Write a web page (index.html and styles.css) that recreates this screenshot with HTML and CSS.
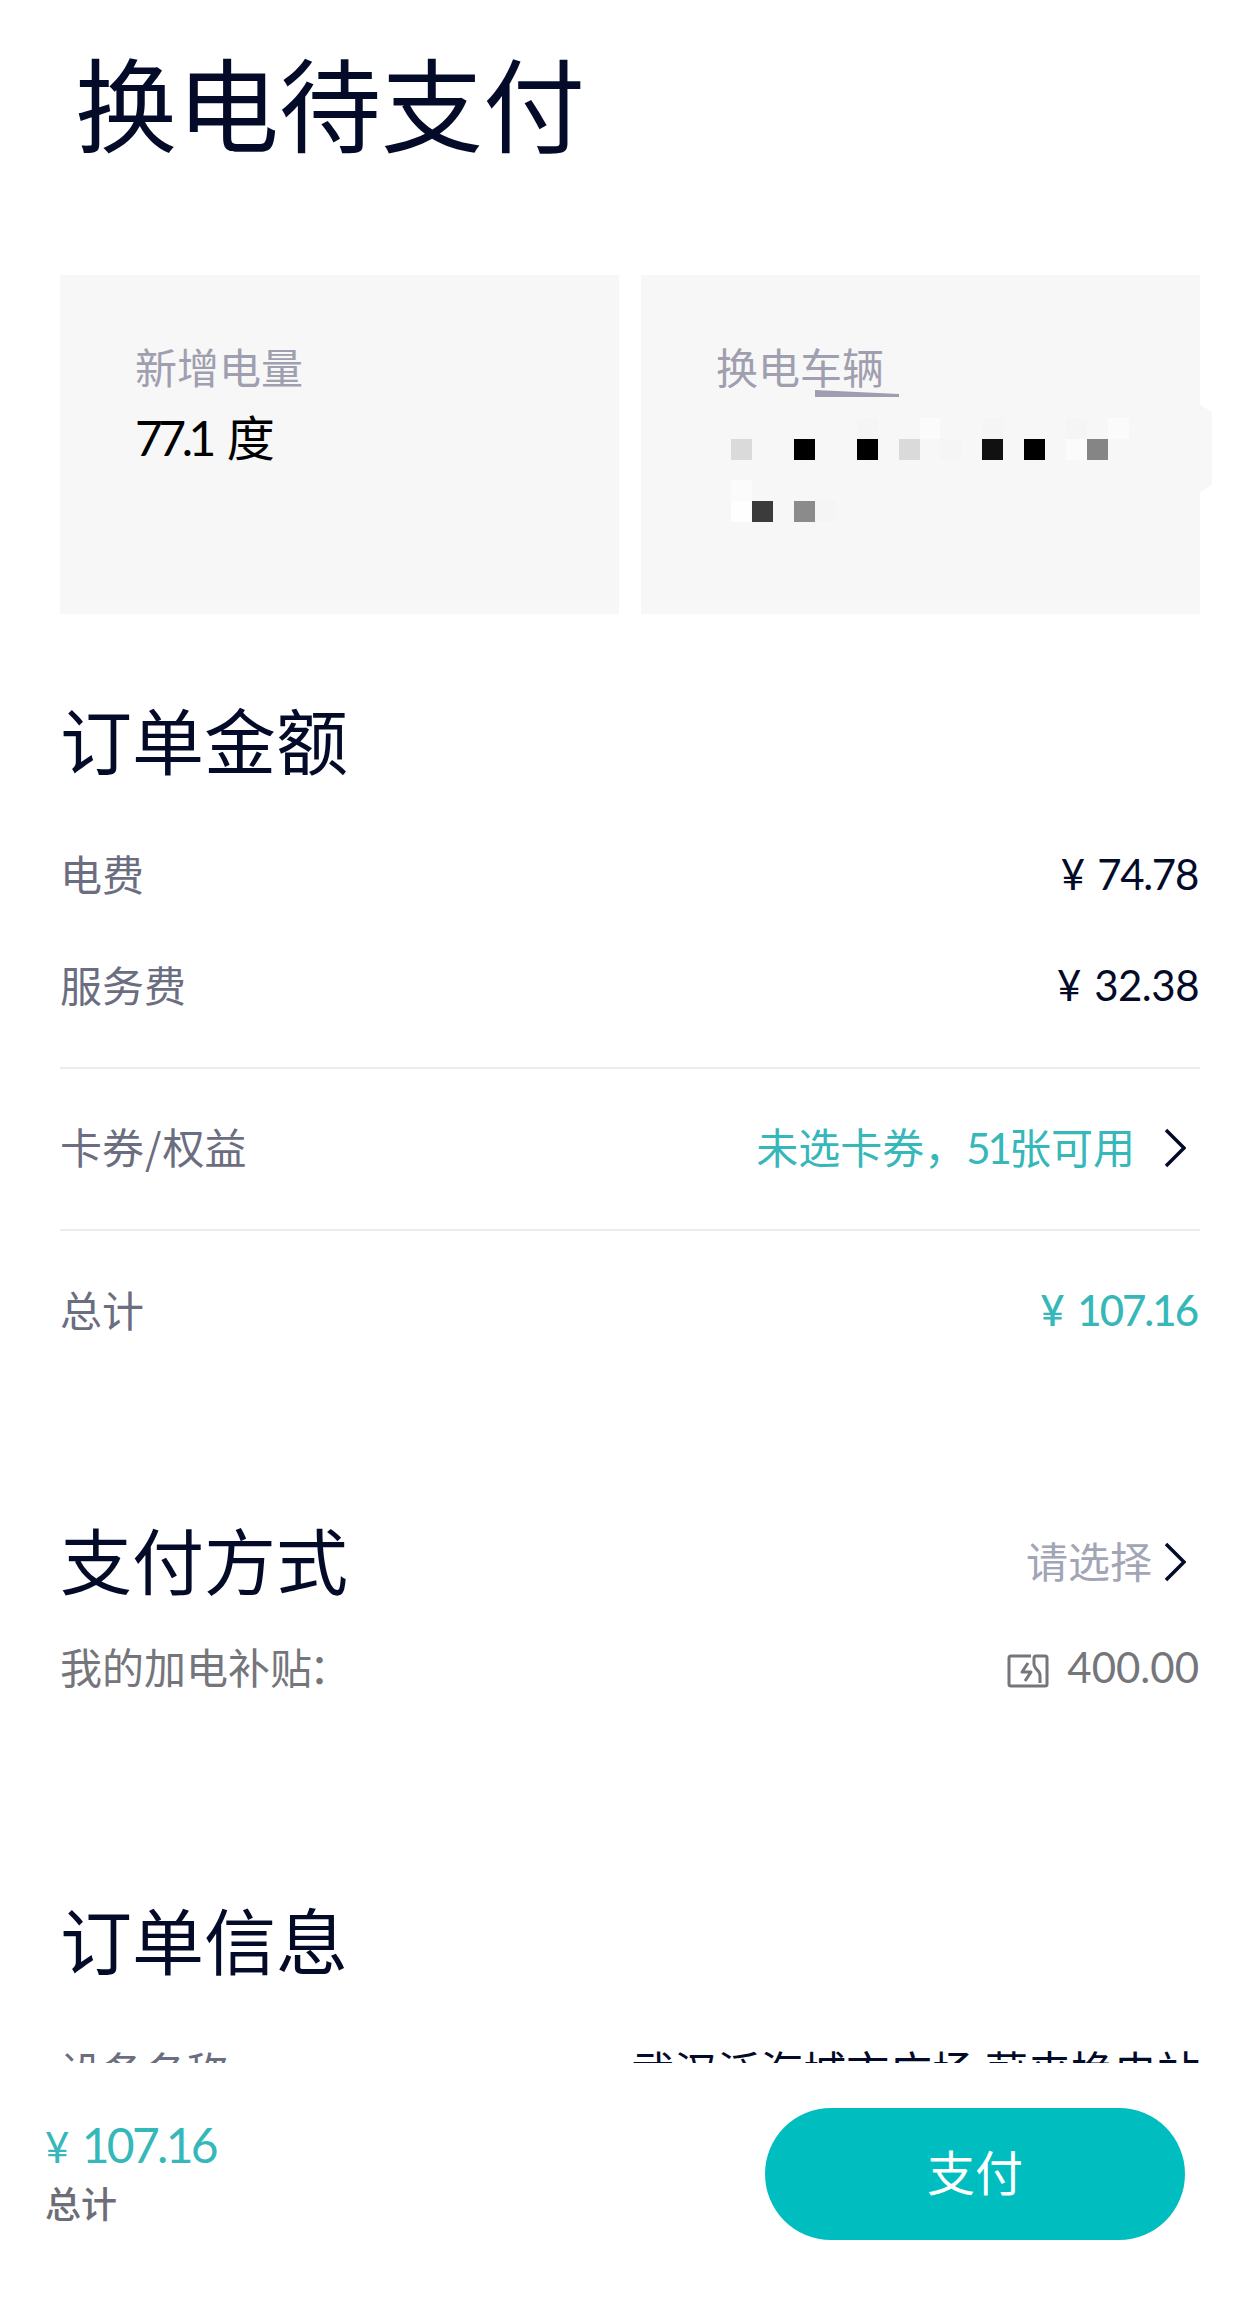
FILE: index.html
```html
<!DOCTYPE html>
<html lang="zh-CN">
<head>
    <meta charset="UTF-8">
    <meta name="viewport" content="width=device-width, initial-scale=1.0">
    <title>换电待支付</title>
    <link rel="stylesheet" href="styles.css">
</head>
<body>
    <div class="page">
        <div class="content">
            <h1>换电待支付</h1>

            <div class="cards">
                <div class="card">
                    <p class="card-label">新增电量</p>
                    <p class="card-value"><span class="num">77.1</span>度</p>
                </div>
                <div class="card">
                    <p class="card-label">换电车辆</p>
                    <!-- hidden plate number -->
                    <svg class="mosaic" width="572" height="340" viewBox="0 0 572 340" shape-rendering="crispEdges">
                        <path fill="#f7f7f7" d="M559 130L571 137V210L559 217Z"/>
                        <path fill="#9f9daf" shape-rendering="auto" d="M174 115L258 119V122H174Z"/>
                        <path fill="#fbfbfb" d="M279 143h20v21h-20zM467 143h21v21h-21zM425 164h21v21h-21zM90 205h21v21h-21z"/>
                        <path fill="#f5f5f5" d="M216 143h21v21h-21zM342 143h21v21h-21zM425 143h21v21h-21zM299 164h21v21h-21zM153 226h42v21h-42z"/>
                        <path fill="#fefefe" d="M90 226h21v21h-21z"/>
                        <path fill="#dadada" d="M90 164h21v21h-21zM258 164h21v21h-21z"/>
                        <path fill="#000" d="M153 164h21v21h-21zM216 164h21v21h-21zM383 164h21v21h-21z"/>
                        <path fill="#111" d="M341 164h21v21h-21z"/>
                        <path fill="#858585" d="M446 164h21v21h-21z"/>
                        <path fill="#3b3b3b" d="M111 226h21v21h-21z"/>
                        <path fill="#8b8b8b" d="M153 226h21v21h-21z"/>
                    </svg>
                </div>
            </div>

            <h2 class="amount-title">订单金额</h2>
            <div class="row">
                <span class="label">电费</span>
                <span class="num price tight">¥ 74.78</span>
            </div>
            <div class="row">
                <span class="label">服务费</span>
                <span class="num price">¥ 32.38</span>
            </div>
            <div class="row coupon">
                <span class="label">卡券<span class="slash">/</span>权益</span>
                <span class="link">
                    <span>未选卡券，<span class="num count">51</span>张可用</span>
                    <svg class="arrow" width="22" height="42" viewBox="0 0 22 42">
                        <path d="M2 3L20 21L2 39" fill="none" stroke="#040b29" stroke-width="3.5"/>
                    </svg>
                </span>
            </div>
            <div class="row total">
                <span class="label">总计</span>
                <span class="num price teal">¥ 107.16</span>
            </div>

            <div class="pay-head">
                <h2>支付方式</h2>
                <span class="choose">
                    <span>请选择</span>
                    <svg class="arrow" width="22" height="42" viewBox="0 0 22 42">
                        <path d="M2 3L20 21L2 39" fill="none" stroke="#040b29" stroke-width="3.5"/>
                    </svg>
                </span>
            </div>
            <div class="row subsidy">
                <span>我的加电补贴<span class="colon">：</span></span>
                <span class="balance">
                    <svg width="42" height="34" viewBox="0 0 42 34" fill="none" stroke="#75767c" stroke-width="3" stroke-linejoin="round">
                        <path d="M24 2H4Q2 2 2 4V30Q2 32 4 32H38Q40 32 40 30V4Q40 2 38 2H29Q27 2 27 4V10Q27 12 28.500 14L32 18Q33 20 33 22V29"/>
                        <path d="M21 9L15 18H24L18 27"/>
                    </svg>
                    <span class="num">400.00</span>
                </span>
            </div>

            <h2 class="info-title">订单信息</h2>
            <div class="row device">
                <span class="label">设备名称</span>
                <span class="station">武汉泛海城市广场 蔚来换电站</span>
            </div>
        </div>

        <div class="footer">
            <div class="sum">
                <p class="num sum-price"><span class="yen">¥</span>107.16</p>
                <p class="sum-label">总计</p>
            </div>
            <button class="pay">支付</button>
        </div>
    </div>
</body>
</html>
```
FILE: styles.css
```css
* {
    box-sizing: border-box;
}

body {
    margin: 0;
    background-color: #fff;
    color: #040b29;
    font-family: "Noto Sans CJK SC", sans-serif;
    font-size: 42px;
}

h1, h2, p {
    margin: 0;
    font-weight: 400;
}

.num {
    font-family: Lato, "Noto Sans CJK SC", sans-serif;
}

.page {
    height: 2315px;
    display: flex;
    flex-direction: column;
    overflow: hidden;
}

.content {
    height: 2063px;
    padding: 41px 60px 0;
    overflow: hidden;
}

h1 {
    padding-left: 15px;
    font-size: 102px;
    line-height: 120px;
}

h2 {
    font-size: 72px;
    line-height: 100px;
}

/* top cards */
.cards {
    display: flex;
    gap: 22px;
    margin-top: 114px;
}

.card {
    position: relative;
    flex: 1;
    height: 339px;
    padding: 61px 75px 0;
    background-color: #f7f7f7;
}

.card-label {
    color: #9f9fb0;
    line-height: 60px;
}

.card-value {
    margin-top: 9px;
    color: #000;
    font-size: 48px;
    line-height: 60px;
}

.card-value .num {
    margin-right: 15px;
    letter-spacing: -4.5px;
}

.mosaic {
    position: absolute;
    top: 0;
    left: 0;
}

/* order amount */
.amount-title {
    margin-top: 74px;
    margin-bottom: 29px;
}

.row {
    display: flex;
    justify-content: space-between;
    align-items: center;
    height: 111px;
}

.label {
    color: #6b6d80;
}

.slash {
    padding: 0 1px;
}

.price {
    padding: 3px 1px 0 0;
    letter-spacing: -0.5px;
    word-spacing: 3px;
}

.tight {
    padding-right: 2px;
    letter-spacing: -1.3px;
    word-spacing: 4px;
}

.coupon {
    height: 164px;
    margin-top: 28px;
    padding-bottom: 7px;
    border-top: 2px solid #ececec;
    border-bottom: 2px solid #ececec;
}

.total {
    height: 155px;
}

.teal, .link {
    color: #36b7b9;
}

.teal {
    padding-right: 3px;
    font-weight: 500;
    letter-spacing: -2px;
    word-spacing: 6px;
}

.link, .choose, .balance {
    display: flex;
    align-items: center;
}

.count {
    letter-spacing: -3px;
}

.arrow {
    margin: 5px 14px 0 29px;
}

/* payment method */
.pay-head {
    display: flex;
    justify-content: space-between;
    align-items: center;
    margin-top: 122px;
}

.choose {
    padding-top: 2px;
    color: #a2a5b5;
}

.choose .arrow {
    margin-left: 12px;
}

.subsidy {
    height: 100px;
    margin-top: 7px;
    color: #75767c;
}

.colon {
    margin-left: -3px;
}

.balance {
    padding: 3px 1px 0 0;
}

.balance svg {
    margin: 9px 18px 0 0;
}

.info-title {
    margin-top: 173px;
}

.device {
    height: 100px;
    margin-top: 31px;
}

.station {
    font-size: 43px;
}

/* bottom bar */
.footer {
    display: flex;
    justify-content: space-between;
    height: 252px;
    padding: 45px 75px 0 45px;
    background-color: #fff;
}

.sum-price {
    margin-top: 7px;
    color: #36b7b9;
    font-size: 48px;
    line-height: 60px;
    letter-spacing: -2.7px;
}

.yen {
    margin-right: 15px;
    font-size: 42px;
}

.sum-label {
    color: #6d6d75;
    font-size: 36px;
    font-weight: 500;
    line-height: 50px;
}

.pay {
    width: 420px;
    height: 132px;
    padding: 0 0 9px;
    border: 0;
    border-radius: 66px;
    background-color: #00bebf;
    color: #fff;
    font-family: inherit;
    font-size: 48px;
}
```
